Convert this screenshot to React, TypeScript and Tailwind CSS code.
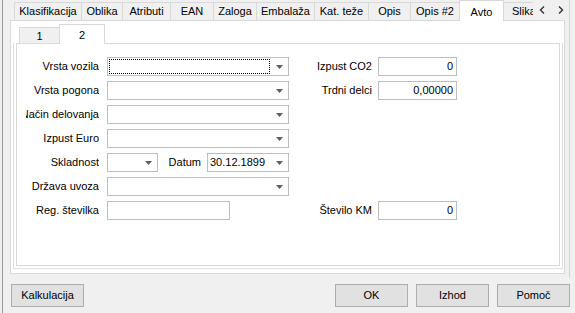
import React from "react";

const tabs = [
  { label: "Klasifikacija", w: "w-[67px]" },
  { label: "Oblika", w: "w-[41px]" },
  { label: "Atributi", w: "w-[48px]" },
  { label: "EAN", w: "w-[43px]" },
  { label: "Zaloga", w: "w-[43px]" },
  { label: "Embalaža", w: "w-[58px]" },
  { label: "Kat. teže", w: "w-[54px]" },
  { label: "Opis", w: "w-[42px]" },
  { label: "Opis #2", w: "w-[49px]" },
];

const Arrow = () => (
  <svg width="7" height="4" viewBox="0 0 7 4">
    <path d="M0 0h7L3.5 4z" fill="#5f5f5f" />
  </svg>
);

const Combo = ({ w, value, focus }: { w: string; value?: string; focus?: boolean }) => (
  <div className={`flex h-[19px] items-stretch border border-[#bdbdbd] bg-white ${w}`}>
    <div className="flex flex-1 p-px">
      <div className={`flex flex-1 items-center pl-px ${focus ? "border border-dotted border-black" : ""}`}>
        {value}
      </div>
    </div>
    <div className="flex w-[17px] items-center justify-center">
      <Arrow />
    </div>
  </div>
);

const Edit = ({ w, value }: { w: string; value?: string }) => (
  <div className={`flex h-[19px] items-center justify-end border border-[#bdbdbd] bg-white pr-[3px] ${w}`}>
    {value}
  </div>
);

const Label = ({ text }: { text: string }) => (
  <div className="flex w-[73px] justify-end overflow-hidden whitespace-nowrap mr-[8px]">{text}</div>
);

const RightField = ({ label, value }: { label: string; value: string }) => (
  <div className="flex items-center">
    <div className="flex w-[83px] justify-end whitespace-nowrap mr-[6px]">{label}</div>
    <Edit w="w-[79px]" value={value} />
  </div>
);

const Btn = ({ text }: { text: string }) => (
  <div className="flex h-[23px] w-[73px] items-center justify-center border border-[#adadad] bg-[#e1e1e1]">
    {text}
  </div>
);

export default function App() {
  return (
    <div className="h-[313px] w-[575px] overflow-hidden bg-[#f0f0f0] pl-[2px] text-[11px] text-black font-['Liberation_Sans',Arial,sans-serif]">
      <div className="flex h-full flex-col border-l border-[#9a9a9a]">
        <div className="h-[278px] w-[567px] border-r border-[#d4d4d4]">
          {/* outer tab control */}
          <div className="ml-[7px] flex h-[274px] w-[555px] flex-col">
            <div className="relative z-10 flex h-[20px] items-end pl-[4px]">
              {tabs.map((t) => (
                <div
                  key={t.label}
                  className={`flex h-[18px] items-center justify-center border-l border-t border-[#d9d9d9] bg-[#f0f0f0] ${t.w}`}
                >
                  {t.label}
                </div>
              ))}
              <div className="-mb-px flex h-[21px] w-[45px] items-start justify-center border-x border-t border-[#d9d9d9] bg-white pt-[3px]">
                Avto
              </div>
              <div className="flex h-[18px] w-[29px] items-center overflow-hidden whitespace-nowrap border-t border-[#d9d9d9] bg-[#f0f0f0] pl-[8px]">
                Slika
              </div>
              <div className="flex h-[20px] flex-1 items-center gap-[13px] bg-[#f0f0f0] pb-px pl-[6px]">
                <svg width="6" height="8" viewBox="0 0 6 8">
                  <path d="M5 0.5L1.5 4L5 7.5" fill="none" stroke="#333" strokeWidth="1.4" />
                </svg>
                <svg width="6" height="8" viewBox="0 0 6 8">
                  <path d="M1 0.5L4.5 4L1 7.5" fill="none" stroke="#333" strokeWidth="1.4" />
                </svg>
              </div>
            </div>
            <div className="flex flex-1 flex-col border border-[#d9d9d9] bg-white pl-[2px] pr-px pb-[4px] pt-[3px]">
              {/* inner tab control */}
              <div className="relative z-10 flex h-[19px] items-end pl-[6px]">
                <div className="flex h-[16px] w-[40px] items-center justify-center border-l border-t border-[#d9d9d9] bg-[#f0f0f0] pt-[2px]">
                  1
                </div>
                <div className="-mb-px flex h-[20px] w-[46px] items-start justify-center border-x border-t border-[#d9d9d9] bg-white pt-[2px]">
                  2
                </div>
              </div>
              <div className="flex flex-1 flex-col border-x border-b border-[#dedede] px-[2px] pb-[2px]">
                <div className="flex flex-1 flex-col gap-[5px] border border-[#d9d9d9] pl-[9px] pt-[13px]">
                  <div className="flex h-[19px] items-center">
                    <div className="flex w-[263px] items-center">
                      <Label text="Vrsta vozila" />
                      <Combo w="w-[182px]" focus />
                    </div>
                    <RightField label="Izpust CO2" value="0" />
                  </div>
                  <div className="flex h-[19px] items-center">
                    <div className="flex w-[263px] items-center">
                      <Label text="Vrsta pogona" />
                      <Combo w="w-[182px]" />
                    </div>
                    <RightField label="Trdni delci" value="0,00000" />
                  </div>
                  <div className="flex h-[19px] items-center">
                    <Label text="Način delovanja" />
                    <Combo w="w-[182px]" />
                  </div>
                  <div className="flex h-[19px] items-center">
                    <Label text="Izpust Euro" />
                    <Combo w="w-[182px]" />
                  </div>
                  <div className="flex h-[19px] items-center">
                    <Label text="Skladnost" />
                    <Combo w="w-[51px]" />
                    <div className="flex w-[43px] justify-end mr-[6px]">Datum</div>
                    <Combo w="w-[82px]" value="30.12.1899" />
                  </div>
                  <div className="flex h-[19px] items-center">
                    <Label text="Država uvoza" />
                    <Combo w="w-[182px]" />
                  </div>
                  <div className="flex h-[19px] items-center">
                    <div className="flex w-[263px] items-center">
                      <Label text="Reg. številka" />
                      <Edit w="w-[123px]" />
                    </div>
                    <RightField label="Število KM" value="0" />
                  </div>
                </div>
              </div>
            </div>
          </div>
        </div>
        {/* buttons */}
        <div className="mt-[6px] flex pl-[8px] pr-[5px]">
          <Btn text="Kalkulacija" />
          <div className="ml-auto flex gap-[8px]">
            <Btn text="OK" />
            <Btn text="Izhod" />
            <Btn text="Pomoč" />
          </div>
        </div>
      </div>
    </div>
  );
}
